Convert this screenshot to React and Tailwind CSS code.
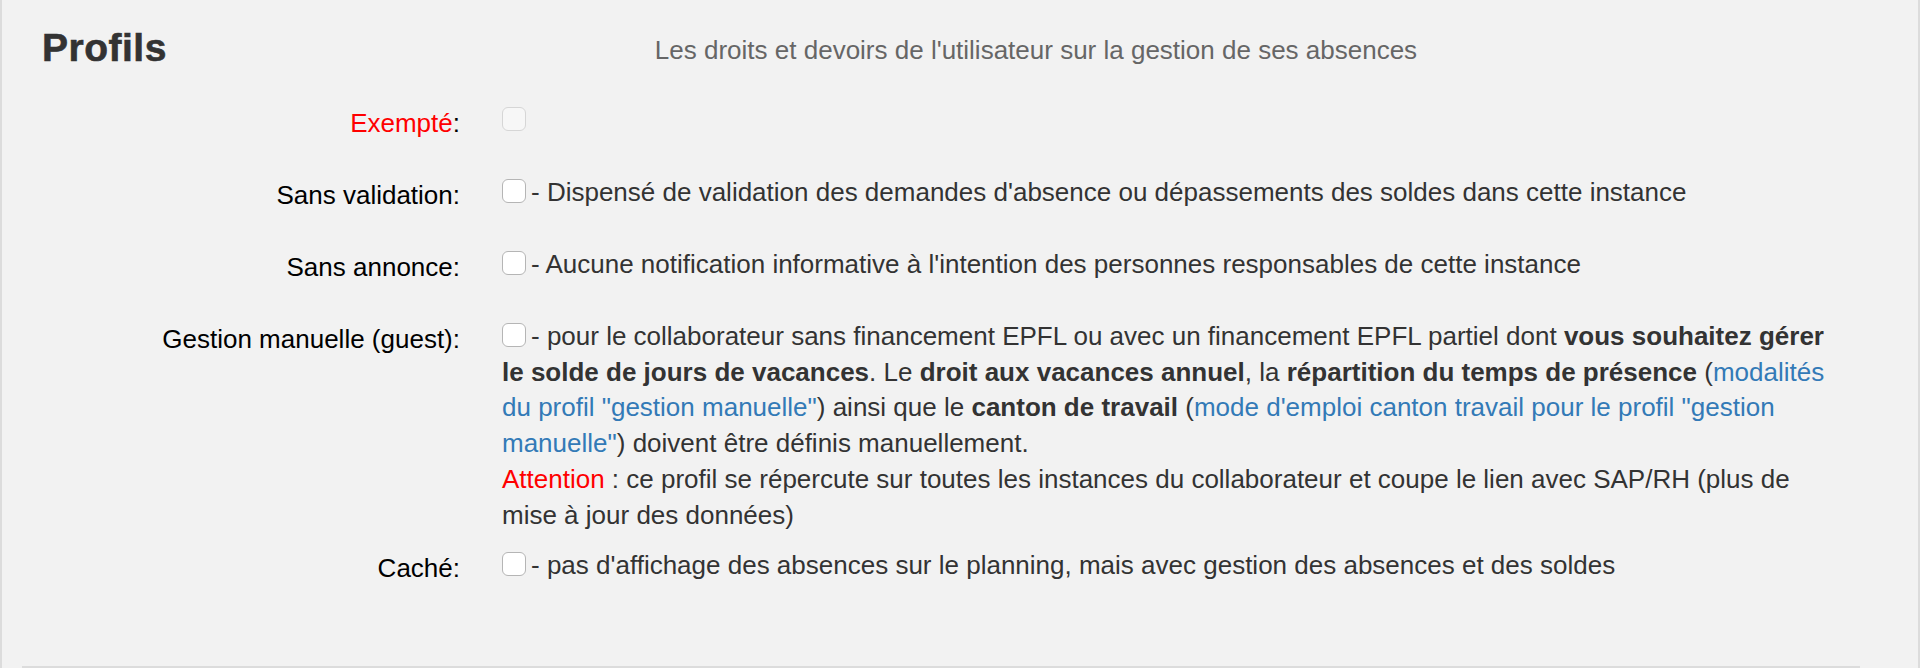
import React from 'react';

const font = { fontFamily: '"Liberation Sans", Arial, Helvetica, sans-serif' };

const Box = ({ disabled }) => (
    <span
        role="checkbox"
        aria-checked="false"
        aria-disabled={disabled ? 'true' : 'false'}
        className={`inline-block w-[24px] h-[24px] rounded-[6px] border align-[-2px] mr-[5px] ${
            disabled ? 'bg-[#f7f7f7] border-[#d6d6d6]' : 'bg-white border-[#b5b5b5]'
        }`}
    />
);

const Row = ({ label, children, className = 'h-[72px]' }) => (
    <div className={`flex ${className}`}>
        <div className="w-[458px] shrink-0 text-right pt-[3px] text-black">{label}</div>
        <div className="ml-[42px] w-[1330px] text-[#333]">{children}</div>
    </div>
);

const A = ({ children }) => (
    <a href="#" className="text-[#337ab7]">{children}</a>
);

export default function App() {
    return (
        <div className="h-[668px] overflow-hidden bg-[#f2f2f2]" style={font}>
            <div className="h-[668px] flex flex-col border-x-2 border-[#dcdcdc] pt-[26px] text-[26px] leading-[35.7px]">
                <div className="flex items-start h-[44px]">
                    <h2 className="w-[152px] shrink-0 pl-[40px] text-[39px] leading-[44px] font-bold text-[#333] tracking-[0.5px] [-webkit-text-stroke:0.6px_#333]">
                        Profils
                    </h2>
                    <p className="flex-1 text-center pt-[7px] text-[#666]">
                        Les droits et devoirs de l'utilisateur sur la gestion de ses absences
                    </p>
                </div>

                <div className="mt-[33px]">
                    <Row label={<><span className="text-[#ff0000]">Exempté</span>:</>}>
                        <Box disabled />
                    </Row>

                    <Row label="Sans validation:">
                        <Box />- Dispensé de validation des demandes d'absence ou dépassements des soldes dans cette instance
                    </Row>

                    <Row label="Sans annonce:">
                        <Box />- Aucune notification informative à l'intention des personnes responsables de cette instance
                    </Row>

                    <Row label="Gestion manuelle (guest):" className="pb-[15px]">
                        <Box />- pour le collaborateur sans financement EPFL ou avec un financement EPFL partiel dont{' '}
                        <b>vous souhaitez gérer le solde de jours de vacances</b>. Le <b>droit aux vacances annuel</b>, la{' '}
                        <b>répartition du temps de présence</b> (<A>modalités du profil "gestion manuelle"</A>) ainsi que le{' '}
                        <b>canton de travail</b> (<A>mode d'emploi canton travail pour le profil "gestion manuelle"</A>) doivent
                        être définis manuellement.
                        <br />
                        <span className="text-[#ff0000]">Attention</span> : ce profil se répercute sur toutes les instances du
                        collaborateur et coupe le lien avec SAP/RH (plus de mise à jour des données)
                    </Row>

                    <Row label="Caché:">
                        <Box />- pas d'affichage des absences sur le planning, mais avec gestion des absences et des soldes
                    </Row>
                </div>

                <div className="mt-auto ml-[20px] w-[1838px] h-[2px] bg-[#dcdcdc]" />
            </div>
        </div>
    );
}
